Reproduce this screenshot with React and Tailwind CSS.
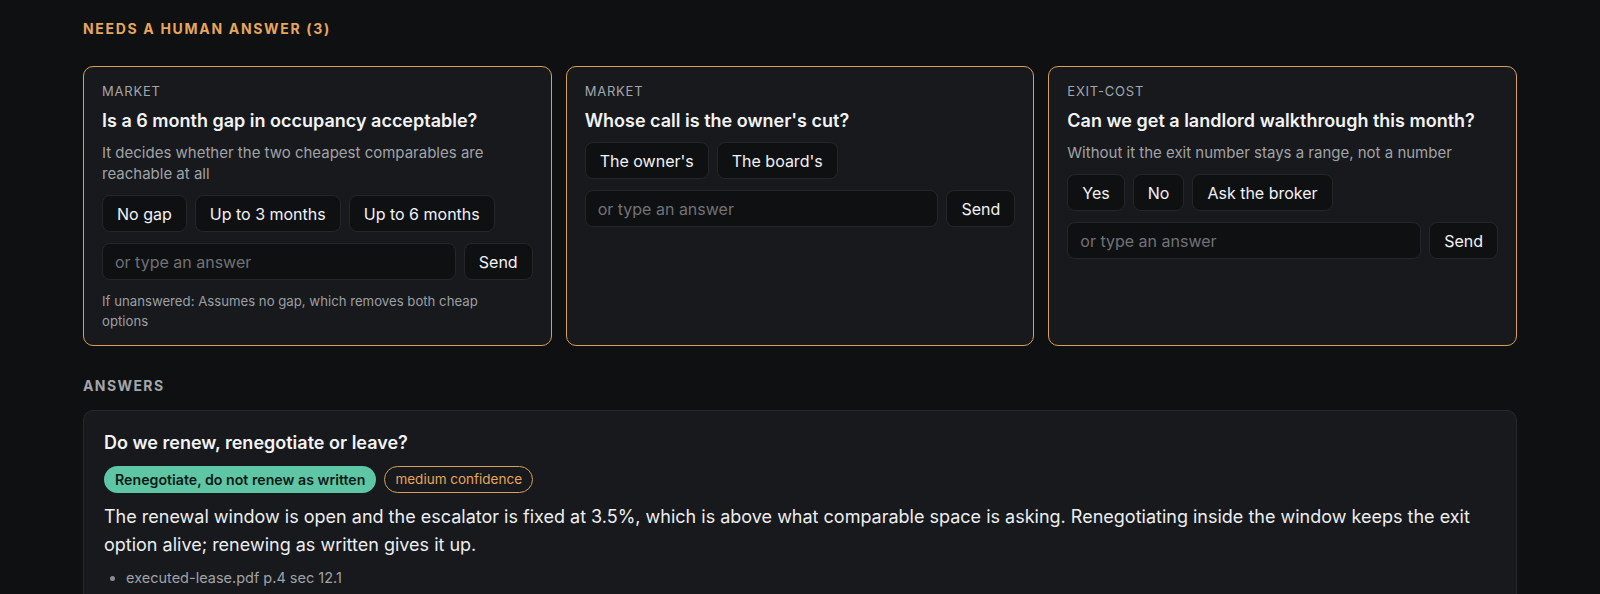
import React from 'react';

const questions = [
  {
    tag: 'MARKET',
    title: 'Is a 6 month gap in occupancy acceptable?',
    desc: 'It decides whether the two cheapest comparables are reachable at all',
    options: ['No gap', 'Up to 3 months', 'Up to 6 months'],
    fallback: 'If unanswered: Assumes no gap, which removes both cheap options',
  },
  {
    tag: 'MARKET',
    title: "Whose call is the owner's cut?",
    options: ["The owner's", "The board's"],
  },
  {
    tag: 'EXIT-COST',
    title: 'Can we get a landlord walkthrough this month?',
    desc: 'Without it the exit number stays a range, not a number',
    options: ['Yes', 'No', 'Ask the broker'],
  },
];

const QuestionCard = ({ q }) => (
  <div className="border border-[#d6a058] rounded-[10px] bg-[#17191c] px-[18px] pt-[15px] pb-[14px]">
    <div className="text-[13px] tracking-[0.06em] text-[#a3a6ab] leading-[18px]">{q.tag}</div>
    <div className="mt-[8px] text-[18px] font-semibold text-[#f2f3f5] leading-[26px]">{q.title}</div>
    {q.desc && <div className="mt-[8px] text-[15px] text-[#a0a3a8] leading-[21px] pr-4">{q.desc}</div>}
    <div className={(q.desc ? 'mt-[11px]' : 'mt-[8px]') + ' flex flex-wrap gap-2'}>
      {q.options.map((o, i) => (
        <button key={i} className="h-[37px] px-[14px] rounded-[8px] border border-[#24262a] bg-[#0f1012] text-[16px] text-[#f2f3f5]">{o}</button>
      ))}
    </div>
    <div className="mt-[11px] flex gap-2">
      <div className="flex-1 h-[37px] rounded-[8px] border border-[#24262a] bg-[#0f1012] px-3 flex items-center text-[16px] text-[#6f7277]">or type an answer</div>
      <button className="h-[37px] px-[14px] rounded-[8px] border border-[#24262a] bg-[#0f1012] text-[16px] text-[#f2f3f5]">Send</button>
    </div>
    {q.fallback && <div className="mt-[11px] text-[13.2px] text-[#9c9fa4] leading-[20px] pr-8">{q.fallback}</div>}
  </div>
);

export default function App() {
  return (
    <div className="min-h-screen bg-[#0f1012] px-[83px] pt-[19px]" style={{ fontFamily: 'Inter, "Noto Sans", sans-serif' }}>
      <div className="text-[14px] font-bold tracking-[0.12em] text-[#e6a65c] leading-[20px]">NEEDS A HUMAN ANSWER (3)</div>
      <div className="mt-[27px] grid grid-cols-3 gap-[14px]">
        {questions.map((q, i) => <QuestionCard key={i} q={q} />)}
      </div>
      <div className="mt-[30px] text-[14px] font-bold tracking-[0.1em] text-[#a3a6ab] leading-[20px]">ANSWERS</div>
      <div className="mt-[14px] rounded-[10px] border border-[#25272b] bg-[#17191c] px-[20px] pt-[19px] pb-6">
        <div className="text-[18px] font-semibold text-[#f2f3f5] leading-[26px]">Do we renew, renegotiate or leave?</div>
        <div className="mt-[10px] flex gap-2">
          <span className="h-[27px] px-[11px] rounded-full bg-[#5ec5a5] text-[#0f1a16] text-[14.2px] font-semibold flex items-center">Renegotiate, do not renew as written</span>
          <span className="h-[27px] px-[10px] rounded-full border border-[#d6a058] text-[#e6a65c] text-[13.5px] flex items-center">medium confidence</span>
        </div>
        <p className="mt-[10px] text-[18px] text-[#eceef0] leading-[27.6px]">
          The renewal window is open and the escalator is fixed at 3.5%, which is above what comparable space is asking. Renegotiating inside the window keeps the exit option alive; renewing as written gives it up.
        </p>
        <ul className="mt-[10px] list-disc pl-[22px] text-[14.5px] text-[#a0a3a8] leading-[20px] marker:text-[#8a8d92]">
          <li>executed-lease.pdf p.4 sec 12.1</li>
        </ul>
      </div>
    </div>
  );
}
